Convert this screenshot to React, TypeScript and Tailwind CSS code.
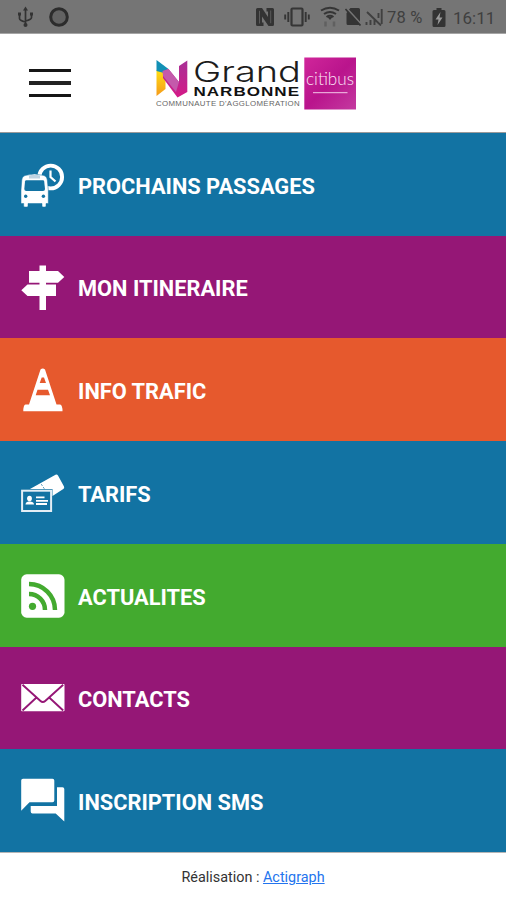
import { ReactNode } from "react";

type TypeMenuItem = {
  label: string;
  color: string;
  icon: ReactNode;
}

const BusIcon = () => (
  <svg viewBox="0 0 44 44" className="h-11 w-11" fill="#fff">
    <circle cx="29.7" cy="14" r="11.4" fill="#1273a3" stroke="#fff" strokeWidth="3.9" />
    <path d="M29.500 7.500V14L34.500 18.500" fill="none" stroke="#fff" strokeWidth="2.200" />
    <path d="M4 12.500Q13.500 9.500 23 12.500Q26 13.500 26.300 17L27.300 27V40.500H25V43Q25 44 24 44H22Q21 44 21 43V40.500H7V43Q7 44 6 44H3.700Q2.700 44 2.700 43V40.500H0V27L.8 17Q1 13.500 4 12.500Z" stroke="#1273a3" strokeWidth=".5" />
    <path d="M8 12.500Q13.500 11 19 12.500V15.500H8Z" fill="#bfd3e2" />
    <path d="M5.300 17.300H22Q23 17.300 23.200 18.500L24 26Q24 28 22 28H5.300Q3.300 28 3.300 26L4 18.500Q4.200 17.300 5.300 17.300Z" fill="#1273a3" />
    <circle cx="4.700" cy="33.300" r="1.700" fill="#1273a3" />
    <circle cx="22.400" cy="33.300" r="1.700" fill="#1273a3" />
  </svg>
)

const SignIcon = () => (
  <svg viewBox="0 0 44 44" className="h-11 w-11 overflow-visible" fill="#fff">
    <path d="M18.500 -.5H25V5H37L43.300 10.900L37 16.700H25V18.500H35V30H25V44H18.500V30H6.500L.3 24.200L6.500 18.500H18.500V16.700H8V5H18.500Z" />
  </svg>
)

const ConeIcon = () => (
  <svg viewBox="0 0 44 44" className="h-11 w-11" fill="#fff">
    <path d="M19.500 1.500Q21.800 -.5 24 1.500L35.500 36.500H39Q41.500 37 41.500 43.300H2.300Q2.300 37 4.500 36.500H8Z" />
    <path d="M20.700 9.500H23L25 15H18.700ZM16.500 21.700H27L29 27.200H14.700Z" fill="#e6592d" />
  </svg>
)

const TicketIcon = () => (
  <svg viewBox="0 0 44 44" className="h-11 w-11" fill="#fff">
    <path d="M9 18L34.500 3.800Q36 3 37 4.500L43 15.500Q43.700 17 42.300 18L31.500 25V18Z" />
    <path d="M18.500 10.500L23.500 18" fill="none" stroke="#1273a3" strokeWidth="1" strokeDasharray="1.500 2" />
    <rect x="1.100" y="19.700" width="29" height="20.300" fill="#1273a3" stroke="#e4eef5" strokeWidth="2" />
    <ellipse cx="8.500" cy="27.500" rx="2.400" ry="2.800" />
    <path d="M4.500 33.500Q4.500 31 7.500 30.500H9.500Q13 31 13 33.500Z" />
    <path d="M15 26.300H23.500M15 29.800H27M15 33H26" stroke="#fff" strokeWidth="1.800" />
  </svg>
)

const RssIcon = () => (
  <svg viewBox="0 0 44 44" className="h-11 w-11">
    <rect x=".2" y=".3" width="43.300" height="43.400" rx="5.500" fill="#fff" />
    <circle cx="11.500" cy="32.300" r="3.600" fill="#43aa2f" />
    <path d="M8 10A26 26 0 0 1 34 36M8 20A16 16 0 0 1 24 36" fill="none" stroke="#43aa2f" strokeWidth="4.500" />
  </svg>
)

const MailIcon = () => (
  <svg viewBox="0 0 44 44" className="h-11 w-11">
    <rect x=".2" y="8" width="43.300" height="27.300" rx=".8" fill="#fff" />
    <path d="M1.500 8.800L19.500 25Q21.800 27.200 24.200 25L42.200 8.800M15.500 21.500L1.500 34.500M28.200 21.500L42.200 34.500" fill="none" stroke="#951776" strokeWidth="1.900" />
  </svg>
)

const SmsIcon = () => (
  <svg viewBox="0 0 44 44" className="h-11 w-11 overflow-visible" fill="#fff">
    <path d="M2 -.3H31.500Q33.300 -.3 33.300 1.500V21.500Q33.300 23.300 31.500 23.300H8.500L.2 31.700V1.500Q.2 -.3 2 -.3Z" />
    <path d="M36 8.300H41.500Q43.300 8.300 43.300 10V42.500L34.700 34.500H11.500Q9.700 34.500 9.700 32.500V27H36Z" />
  </svg>
)

const menu: TypeMenuItem[] = [
  { label: "PROCHAINS PASSAGES", color: "bg-[#1273a3]", icon: <BusIcon /> },
  { label: "MON ITINERAIRE", color: "bg-[#951776]", icon: <SignIcon /> },
  { label: "INFO TRAFIC", color: "bg-[#e6592d]", icon: <ConeIcon /> },
  { label: "TARIFS", color: "bg-[#1273a3]", icon: <TicketIcon /> },
  { label: "ACTUALITES", color: "bg-[#43aa2f]", icon: <RssIcon /> },
  { label: "CONTACTS", color: "bg-[#951776]", icon: <MailIcon /> },
  { label: "INSCRIPTION SMS", color: "bg-[#1273a3]", icon: <SmsIcon /> },
]

const StatusBar = () => (
  <div className="flex h-[34px] shrink-0 items-center border-b border-[#a5a5a5] bg-[#757575] pt-px pr-[11px] pl-[17px] text-[#3f3f3f]">
    <svg viewBox="0 0 16 22" className="h-[22px] w-4" fill="none" stroke="#333" strokeWidth="1.700">
      <path d="M8.500 3V19M2.500 9V12.500Q2.500 14.500 8.500 16M14.500 8V11.500Q14.500 13.500 8.500 15" />
      <path d="M8.500 .5L11 4.500H6ZM1 6.500H4V9.500H1ZM13 6.500H16V9.500H13Z" fill="#333" stroke="none" />
      <circle cx="8.500" cy="19" r="2" fill="#333" stroke="none" />
    </svg>
    <svg viewBox="0 0 22 22" className="ml-[15px] h-[22px] w-[22px]">
      <circle cx="11" cy="11" r="8.300" fill="#626262" stroke="#2c2c2c" strokeWidth="3" />
    </svg>

    <div className="ml-auto flex items-center">
      <svg viewBox="0 0 18 18" className="h-[18px] w-[18px]" fill="#333">
        <path d="M1.500 0H6L12 9V3.500H10.500V0H16.500Q18 0 18 1.500V16.500Q18 18 16.500 18H12.500L6 8.500V14.500H7.500V18H1.500Q0 18 0 16.500V1.500Q0 0 1.500 0Z" />
        <path d="M3.500 2.800V15.500M14.700 2.500V15.200" fill="none" stroke="#606060" strokeWidth=".9" />
      </svg>
      <svg viewBox="0 0 26 20" className="ml-[10px] h-5 w-[26px]" fill="none" stroke="#353535">
        <rect x="7.500" y="1.500" width="11" height="17" rx="1" strokeWidth="2.200" />
        <path d="M4.300 5V15M1.200 7.500V12.500M21.700 5V15M24.800 7.500V12.500" strokeWidth="1.900" />
      </svg>
      <svg viewBox="0 0 20 22" className="ml-[10px] h-[22px] w-5" fill="none" stroke="#353535" strokeWidth="2">
        <path d="M1 4.500Q10 -1 19 4.500M4 8Q10 4 16 8M6.500 11Q10 8.500 13.500 11" />
        <path d="M7.500 11H12.500L10 14Z" fill="#353535" stroke="none" />
        <path d="M5.500 15.500V20.500M14 15.500V20.500" stroke="#606060" strokeWidth="2.500" />
      </svg>
      <svg viewBox="0 0 16 18" className="ml-[5px] h-[18px] w-4" fill="#343434">
        <path d="M5.500 0H13.500Q15 0 15 1.500V13.500L4 1.500ZM3 3.500L15 17H3Q1.500 17 1.500 15.500V5Z" />
        <path d="M.5 1L15.500 17.500" stroke="#343434" strokeWidth="1.600" />
      </svg>
      <svg viewBox="0 0 18 18" className="ml-[4px] h-[18px] w-[18px]" fill="none" stroke="#404040" strokeWidth="1.900">
        <path d="M1.500 17V14M5.500 17V12M9.500 17V12M13.500 10V5M16.700 16V1M2 4L16 17.500" />
      </svg>
      <span className="ml-[4px] w-[36px] pt-[2px] font-[Roboto] text-[16.500px] leading-none tracking-[0.200px] whitespace-nowrap">78 %</span>
      <svg viewBox="0 0 14 19" className="ml-[9px] h-[19px] w-[14px]">
        <path d="M4.500 0H9.500V2H12Q13.500 2 13.500 3.500V17.500Q13.500 19 12 19H2Q.5 19 .5 17.500V3.500Q.5 2 2 2H4.500Z" fill="#333" />
        <path d="M8.500 4L3.500 11.500H6.500L5.500 17L10.500 9.500H7.500Z" fill="#999" />
      </svg>
      <span className="ml-[7px] w-[42px] pt-[2px] font-[Roboto] text-[17px] leading-none whitespace-nowrap">16:11</span>
    </div>
  </div>
)

const Logo = () => (
  <svg viewBox="155 55 202 56" className="h-14 w-[202px] overflow-visible">
    <defs>
      <linearGradient id="leftBar" x1="0" y1="0" x2="0" y2="1">
        <stop offset="0" stopColor="#ffdf12" />
        <stop offset="1" stopColor="#f59a1b" />
      </linearGradient>
      <linearGradient id="rightBar" x1="0" y1="0" x2="0" y2="1">
        <stop offset="0" stopColor="#a83096" />
        <stop offset="1" stopColor="#d51a87" />
      </linearGradient>
      <linearGradient id="badge" x1="0" y1="0" x2="1" y2="1">
        <stop offset="0" stopColor="#d0269a" />
        <stop offset=".5" stopColor="#b9148c" />
        <stop offset="1" stopColor="#c43aa0" />
      </linearGradient>
    </defs>
    <path d="M156.500 70L165.500 72V89L156.500 96Z" fill="url(#leftBar)" />
    <path d="M156.500 60L168.500 69L164 73L156.500 71Z" fill="#1290b5" />
    <path d="M179 66L187.300 60.500V92L177.500 97.500L163 78V71L168.500 69L179 82Z" fill="url(#rightBar)" />
    <path d="M162.500 71L168.500 69L179 82L176 92L163 76Z" fill="#c45aab" />
    <text x="193" y="81.500" textLength="108" lengthAdjust="spacingAndGlyphs" fontFamily="Inter" fontWeight="300" fontSize="28.500" fill="#1c1c1c">Grand</text>
    <text x="193.500" y="95.500" textLength="106.500" lengthAdjust="spacingAndGlyphs" fontFamily="Liberation Sans" fontWeight="700" fontSize="13.700" letterSpacing=".8" fill="#111">NARBONNE</text>
    <text x="156" y="106" textLength="144" lengthAdjust="spacingAndGlyphs" fontFamily="Liberation Sans" fontSize="7" letterSpacing=".3" fill="#666">COMMUNAUTE D'AGGLOMÉRATION</text>
    <rect x="304.300" y="57.500" width="51.700" height="52" fill="url(#badge)" />
    <text x="306" y="84.500" textLength="48" lengthAdjust="spacingAndGlyphs" fontFamily="Lato" fontWeight="300" fontSize="17" fill="#fbe4f5">citibus</text>
    <path d="M313 92.700H347.500" stroke="#f3c8e8" strokeWidth="1" />
  </svg>
)

export default function App() {
  return (
    <main className="flex h-[900px] w-full flex-col bg-white">
      <StatusBar />

      <header className="flex h-[99px] shrink-0 items-center border-b border-[#9a9a9a] pl-[29px]">
        <button className="flex w-[42px] flex-col gap-[9px]" aria-label="Menu">
          <span className="h-[3px] w-full bg-[#161616]"></span>
          <span className="h-[4px] w-full bg-[#222]"></span>
          <span className="h-[3px] w-full bg-[#161616]"></span>
        </button>
        <div className="ml-[84px]">
          <Logo />
        </div>
      </header>

      <nav className="flex h-[719px] shrink-0 flex-col">
        {menu.map((item) => (
          <a key={item.label} className={`flex flex-1 items-center pt-px pl-[21px] ${item.color}`}>
            {item.icon}
            <span className="ml-[13px] pt-[3.500px] font-[Roboto] text-[21.800px] leading-none font-bold text-white">{item.label}</span>
          </a>
        ))}
      </nav>

      <footer className="flex flex-1 items-center justify-center border-t border-[#b5b5b5] pt-[3px] font-[Roboto] text-[14.400px] text-[#333]">
        <p>Réalisation : <a className="text-[#2374ee] underline">Actigraph</a></p>
      </footer>
    </main>
  )
}
